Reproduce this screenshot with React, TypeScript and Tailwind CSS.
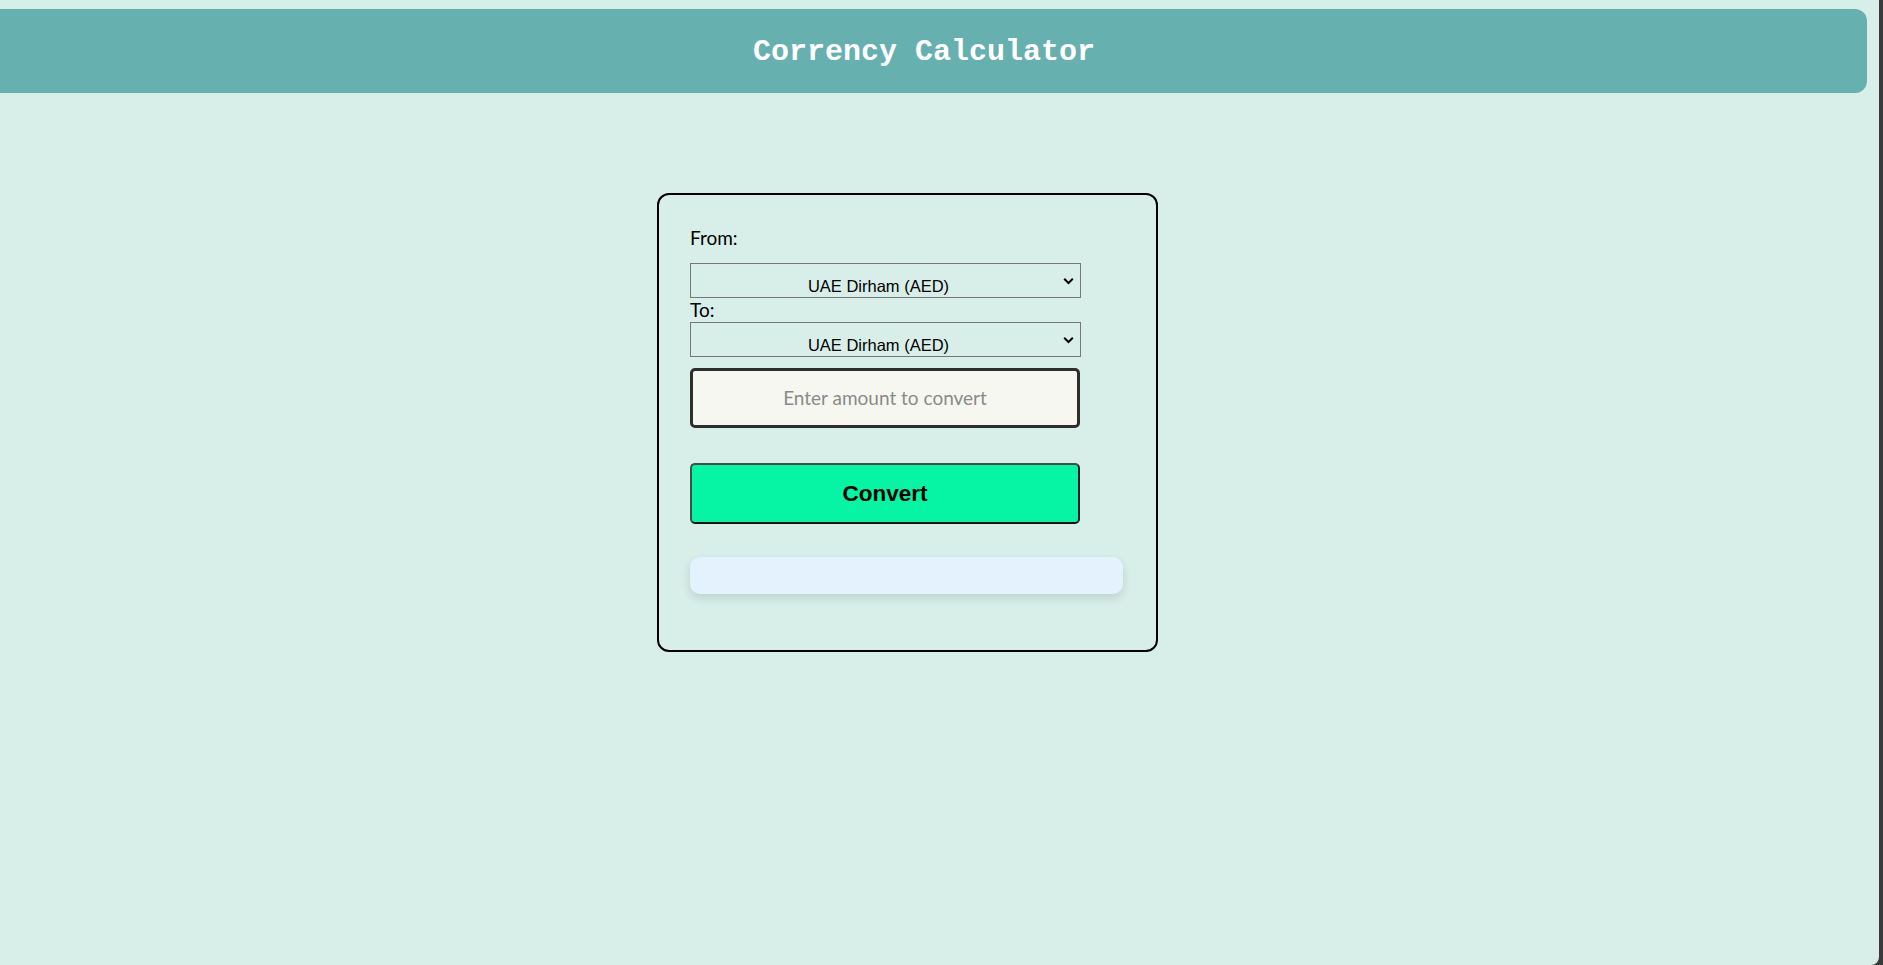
import React from "react";

export default function App() {
  return (
    <div className="flex w-[1883px] min-h-[965px] bg-[#3a3a3a]">
      <div className="w-[1879px] min-h-[965px] bg-[#d8eee8] rounded-br-[8px] flex flex-col">
        <div className="mt-[9px] ml-[-19px] w-[1886px] h-[84px] rounded-[12px] bg-[#67b0b0] flex items-center justify-center">
          <h1 className="text-white text-[30px] font-bold pt-[2px]" style={{ fontFamily: '"Liberation Mono", "Courier New", monospace' }}>
            Corrency Calculator
          </h1>
        </div>

        <div className="pl-[657px] pt-[100px]">
          <div
            className="w-[501px] h-[459px] border-2 border-black rounded-[12px] pl-[31px] pr-[32px] pt-[32px] flex flex-col"
            style={{ fontFamily: 'Lato, "Open Sans", sans-serif' }}
          >
            <label className="block text-[19px] leading-[22px] text-black h-[22px]">From:</label>
            <div className="mt-[14px]">
              <Select />
            </div>
            <label className="block text-[19px] leading-[24px] h-[24px] text-black">To:</label>
            <Select />
            <div className="mt-[11px] w-[390px] h-[60px] border-[3px] border-[#2e2e2e] rounded-[5px] bg-[#f7f7f2] flex items-center justify-center">
              <span className="text-[19px] text-[#8a8a8a]">Enter amount to convert</span>
            </div>
            <button
              className="mt-[35px] w-[390px] h-[61px] rounded-[5px] bg-[#06f5a5] border-2 border-t-[#4a4a4a] border-l-[#4a4a4a] border-r-[#222] border-b-[#111] flex items-center justify-center"
              style={{ fontFamily: '"Liberation Sans", Arial, sans-serif' }}
            >
              <span className="text-[22.5px] font-bold text-black">Convert</span>
            </button>
            <div className="mt-[33px] w-[433px] h-[37px] rounded-[10px] bg-[#e3f2fd] shadow-[0_4px_10px_rgba(0,0,0,0.12)]"></div>
          </div>
        </div>
      </div>
    </div>
  );
}

function Select() {
  return (
    <div className="relative w-[391px] h-[35px] border border-[#767676] bg-[#d8eee8] flex items-end pr-[14px]">
      <span
        className="flex-1 text-center text-[16.5px] leading-[18px] pb-[2px] text-black"
        style={{ fontFamily: '"Liberation Sans", Arial, sans-serif' }}
      >
        UAE Dirham (AED)
      </span>
      <svg className="absolute right-[6px] top-[13px]" width="11" height="8" viewBox="0 0 11 8">
        <path d="M1.2 1.8 L5.5 6 L9.8 1.8" fill="none" stroke="#000" strokeWidth="2" />
      </svg>
    </div>
  );
}
